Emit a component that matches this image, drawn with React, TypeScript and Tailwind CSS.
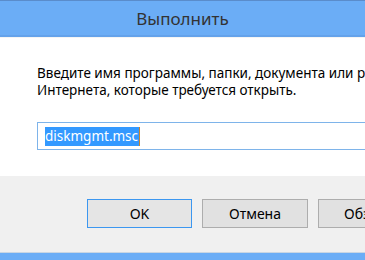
export default function App() {
  const font = { fontFamily: '"Noto Sans", "Open Sans", sans-serif' }
  return (
    <div className="w-[365px] h-[260px] overflow-hidden bg-white flex flex-col" style={font}>
      {/* Title bar */}
      <div className="h-[38px] shrink-0 flex flex-col">
        <div className="h-px bg-[#5a8ccb]" />
        <div className="flex-1 bg-[#6badf6] flex items-center justify-center">
          <span className="text-[17px] leading-[22px] text-[#333] pt-[2px]">Выполнить</span>
        </div>
        <div className="h-[2px] bg-[#64a2ea]" />
        <div className="h-px bg-[#f4f4f4]" />
      </div>

      {/* Body */}
      <div className="h-[138px] shrink-0 pl-[37px] pt-[27px] flex flex-col">
        <div className="text-[13.5px] leading-[17px] text-black whitespace-nowrap">
          <div>Введите имя программы, папки, документа или ресурса</div>
          <div>Интернета, которые требуется открыть.</div>
        </div>
        <div className="mt-[23px] w-[400px] h-[28px] border border-[#7eb4ea] flex items-center pl-[7px]">
          <span className="bg-[#3399ff] text-white text-[13.5px] leading-[19px] pr-px">diskmgmt.msc</span>
          <span className="w-px h-[19px] bg-[#c8842e]" />
        </div>
      </div>

      {/* Footer */}
      <div className="flex-1 bg-[#f0f0f0] flex flex-col">
        <div className="flex-1 flex items-start pt-[23px] pl-[87px] gap-[10px]">
          <button className="w-[105px] h-[29px] shrink-0 border border-[#3c97f0] bg-[#e5e5e5] text-[14px] text-black">OK</button>
          <button className="w-[106px] h-[29px] shrink-0 border border-[#adadad] bg-[#e1e1e1] text-[14px] text-black">Отмена</button>
          <button className="w-[106px] h-[29px] shrink-0 border border-[#adadad] bg-[#e1e1e1] text-[14px] text-black">Обзор...</button>
        </div>
        <div className="h-px bg-[#c9d6e3]" />
        <div className="h-[7px] bg-[#6badf6]" />
      </div>
    </div>
  )
}
